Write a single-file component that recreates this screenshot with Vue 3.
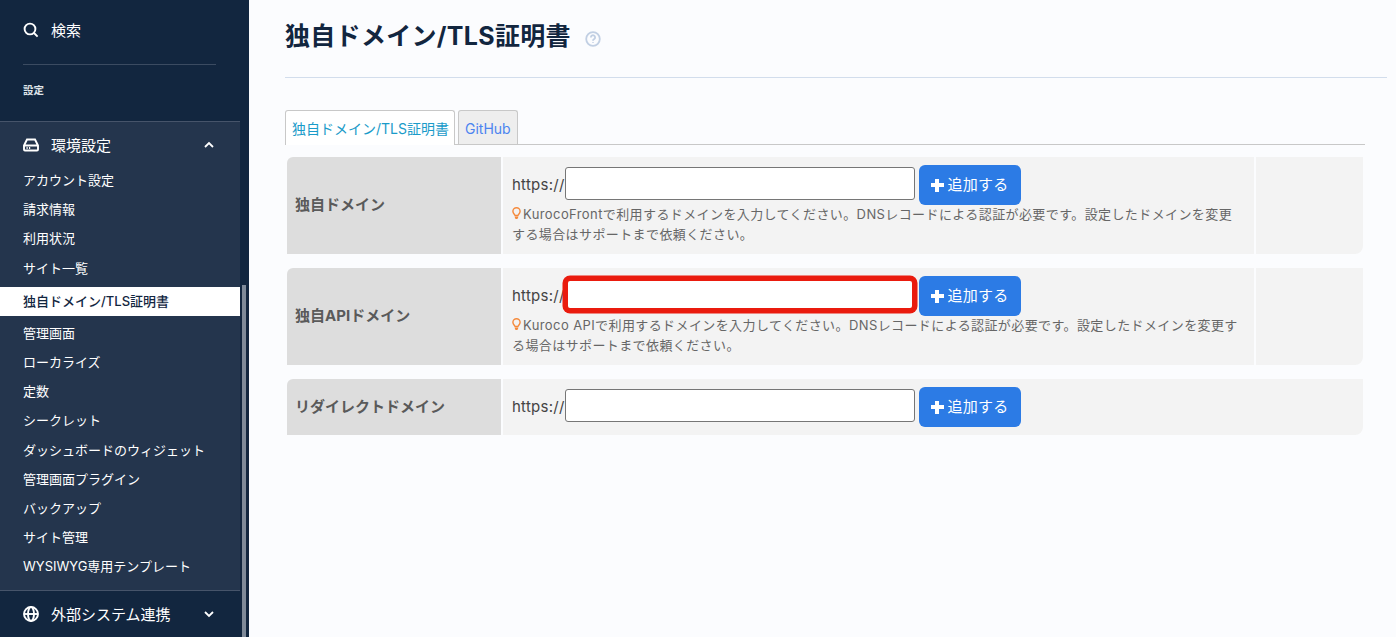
<script setup>
const subMenu = [
  'アカウント設定', '請求情報', '利用状況', 'サイト一覧', '独自ドメイン/TLS証明書', '管理画面', 'ローカライズ', '定数',
  'シークレット', 'ダッシュボードのウィジェット', '管理画面プラグイン', 'バックアップ', 'サイト管理', 'WYSIWYG専用テンプレート',
];
const activeItem = '独自ドメイン/TLS証明書';

const rows = [
  {
    label: '独自ドメイン',
    hint: 'KurocoFrontで利用するドメインを入力してください。DNSレコードによる認証が必要です。設定したドメインを変更する場合はサポートまで依頼ください。',
  },
  {
    label: '独自APIドメイン',
    hint: 'Kuroco APIで利用するドメインを入力してください。DNSレコードによる認証が必要です。設定したドメインを変更する場合はサポートまで依頼ください。',
    marked: true,
  },
  { label: 'リダイレクトドメイン' },
];
</script>

<template>
  <div class="page">
    <aside class="sidebar">
      <div class="search">
        <svg class="nav-icon" viewBox="0 0 16 16"><circle cx="7" cy="7" r="5.4" /><path d="M11 11l3.6 3.6" /></svg>
        <span class="nav-label">検索</span>
      </div>
      <div class="divider"></div>
      <div class="section-title">設定</div>
      <div class="group open">
        <div class="group-head">
          <svg class="nav-icon" viewBox="0 0 16 16"><path d="M4 2.5h8l3 6v4a1 1 0 0 1-1 1H2a1 1 0 0 1-1-1v-4zM1 8.5h14" /><path class="dots" d="M3.5 11h1.2M6 11h1.2" /></svg>
          <span class="nav-label group-name">環境設定</span>
          <svg class="chevron" viewBox="0 0 12 12"><path d="M2 8l4-4 4 4" /></svg>
        </div>
        <ul class="sub-menu">
          <li v-for="item in subMenu" :key="item" :class="{ active: item === activeItem }">{{ item }}</li>
        </ul>
      </div>
      <div class="group">
        <div class="group-head">
          <svg class="nav-icon" viewBox="0 0 16 16"><circle cx="8" cy="8" r="7" /><ellipse cx="8" cy="8" rx="3" ry="7" /><path d="M1 8h14" /></svg>
          <span class="nav-label group-name">外部システム連携</span>
          <svg class="chevron" viewBox="0 0 12 12"><path d="M2 4l4 4 4-4" /></svg>
        </div>
      </div>
      <div class="scrollbar"></div>
    </aside>

    <main class="content">
      <header class="title-bar">
        <h1>独自ドメイン/TLS証明書</h1>
        <svg class="help" viewBox="0 0 16 16">
          <circle cx="8" cy="8" r="6.8" />
          <path d="M5.9 6.4a2.1 2.1 0 1 1 3.3 1.7c-.8.5-1.2.9-1.2 1.7" />
          <path d="M8 11.2v.9" />
        </svg>
      </header>

      <div class="tabs">
        <a class="tab current">独自ドメイン/TLS証明書</a>
        <a class="tab">GitHub</a>
      </div>

      <div class="rows">
        <div v-for="row in rows" :key="row.label" class="row">
          <div class="row-label">{{ row.label }}</div>
          <div class="row-body">
            <div class="field">
              <span class="scheme">https://</span>
              <input type="text" :class="{ marked: row.marked }" />
              <button type="button"><span class="plus"></span><span class="btn-text">追加する</span></button>
            </div>
            <p v-if="row.hint" class="hint">
              <svg class="bulb" viewBox="0 0 10 14">
                <path d="M3.4 9.2C3.2 8 1 7 1 4.6a4 4 0 0 1 8 0C9 7 6.8 8 6.6 9.2z" />
                <path class="base" d="M3.2 10.4h3.6v1.5L5.8 13H4.2l-1-1.1z" />
              </svg>{{ row.hint }}
            </p>
          </div>
          <div class="row-extra"></div>
        </div>
      </div>
    </main>
  </div>
</template>

<style>
html,
body {
  margin: 0;
  height: 100%;
  overflow: hidden;
  background: #fbfcfe;
}
</style>

<style scoped>
.page {
  display: flex;
  height: 637px;
  overflow: hidden;
  font-family: Inter, "Noto Sans CJK JP", sans-serif;
  background: #fbfcfe;
}

/* sidebar */
.sidebar {
  position: relative;
  flex: none;
  width: 249px;
  height: 637px;
  overflow: hidden;
  background: #12263f;
  color: #fff;
}

.search {
  display: flex;
  align-items: center;
  gap: 12px;
  height: 60px;
  padding-left: 23px;
  font-size: 15px;
}

.nav-icon {
  flex: none;
  width: 16px;
  height: 16px;
  fill: none;
  stroke: #fff;
  stroke-width: 1.9;
}

.nav-label {
  margin-top: -2px;
}

.divider {
  width: 193px;
  height: 1px;
  margin: 4px 0 0 23px;
  background: #3b4b61;
}

.section-title {
  height: 56px;
  padding: 19px 0 0 23px;
  box-sizing: border-box;
  font-size: 10.5px;
  line-height: 14px;
  font-weight: 700;
  color: #dfe3e8;
}

.group {
  width: 240px;
}

.group.open {
  background: #24354d;
  border-top: 1px solid #46546a;
  border-bottom: 1px solid #46546a;
  padding-bottom: 9px;
}

.group-head {
  display: flex;
  align-items: center;
  gap: 12px;
  height: 46px;
  padding: 0 25px 0 23px;
  font-size: 15px;
}

.group-name {
  flex: 1;
}

.chevron {
  width: 12px;
  height: 12px;
  fill: none;
  stroke: #fff;
  stroke-width: 1.8;
}

.sub-menu {
  margin: -2px 0 0;
  padding: 0;
  list-style: none;
  font-size: 13px;
}

.sub-menu li {
  height: 29.2px;
  line-height: 29px;
  padding-left: 23px;
}

.sub-menu li.active {
  height: 29px;
  margin: 4px 0 3px;
  background: #fff;
  color: #12263f;
  font-weight: 500;
}

.scrollbar {
  position: absolute;
  left: 242px;
  top: 285px;
  width: 4px;
  height: 352px;
  background: #7f8a99;
}

/* main area */
.content {
  flex: 1;
  min-width: 0;
  padding: 0 31px 0 36px;
}

.title-bar {
  display: flex;
  align-items: center;
  gap: 14px;
  height: 77px;
  margin-right: -22px;
  border-bottom: 1px solid #d2ddec;
}

h1 {
  margin: 0 0 9px;
  font-size: 25px;
  font-weight: 700;
  letter-spacing: 0.3px;
  color: #12263f;
}

.help {
  width: 16px;
  height: 16px;
  margin-top: 1px;
  fill: none;
  stroke: #c1cfe3;
  stroke-width: 1.8;
}

.tabs {
  display: flex;
  gap: 3px;
  height: 34px;
  margin: 32px 0 12px;
  border-bottom: 1px solid #c8c8c8;
}

.tab {
  height: 34px;
  box-sizing: border-box;
  padding: 0 6px;
  border: 1px solid #c8c8c8;
  border-bottom: none;
  border-radius: 3px 3px 0 0;
  background: #eeeeee;
  color: #4c84f0;
  font-size: 14px;
  line-height: 35px;
}

.tab.current {
  height: 35px;
  padding-right: 5px;
  background: #fff;
  color: #1a9bc9;
}

.rows {
  display: flex;
  flex-direction: column;
  gap: 14px;
  margin: 0 2px;
}

.row {
  display: flex;
  gap: 2px;
  color: #555;
}

.row-label {
  flex: none;
  display: flex;
  align-items: center;
  width: 206px;
  padding: 0 0 4px 8px;
  border-radius: 6px 0 0 0;
  background: #dddddd;
  font-size: 15px;
  font-weight: 700;
  color: #5a5a5a;
}

.row-body {
  flex: none;
  width: 742px;
  padding: 8px 0 9px 9px;
  background: #f3f3f3;
}

.row-extra {
  flex: 1;
  border-radius: 0 0 8px 0;
  background: #f3f3f3;
}

.row:last-child .row-body {
  flex: 1;
  padding-bottom: 8px;
  border-radius: 0 0 8px 0;
}

.row:last-child .row-extra {
  display: none;
}

.field {
  display: flex;
  align-items: center;
  height: 40px;
  font-size: 15px;
  letter-spacing: 0.25px;
  color: #444;
}

.scheme {
  margin-top: -2px;
}

input {
  width: 350px;
  height: 33px;
  box-sizing: border-box;
  margin: -3px 4px 0 0;
  padding: 0 4px;
  border: 1px solid #767676;
  border-radius: 3px;
  background: #fff;
}

input.marked {
  border: 3px solid #ea1b0e;
  box-shadow: 0 0 0 2.5px #ea1b0e;
  border-radius: 5px;
}

button {
  display: flex;
  align-items: center;
  gap: 4px;
  height: 40px;
  padding: 0 12px;
  border: none;
  border-radius: 6px;
  background: #2c7be5;
  color: #fff;
  font-family: inherit;
  font-size: 15px;
  letter-spacing: inherit;
}

.btn-text {
  margin-top: -3px;
}

.plus {
  width: 13px;
  height: 13px;
  background:
    linear-gradient(#fff, #fff) center / 13px 4px no-repeat,
    linear-gradient(#fff, #fff) center / 4px 13px no-repeat;
  border-radius: 1px;
}

.hint {
  margin: -1px 0 1px;
  padding-right: 12px;
  font-size: 13px;
  line-height: 20px;
  letter-spacing: 0.4px;
  color: #666;
}

.bulb {
  width: 9px;
  height: 13px;
  margin: 3px 2px 0 0;
  vertical-align: top;
  fill: none;
  stroke: #f58a3c;
  stroke-width: 1.6;
}

.bulb .base {
  fill: #f58a3c;
  stroke: none;
}
</style>
